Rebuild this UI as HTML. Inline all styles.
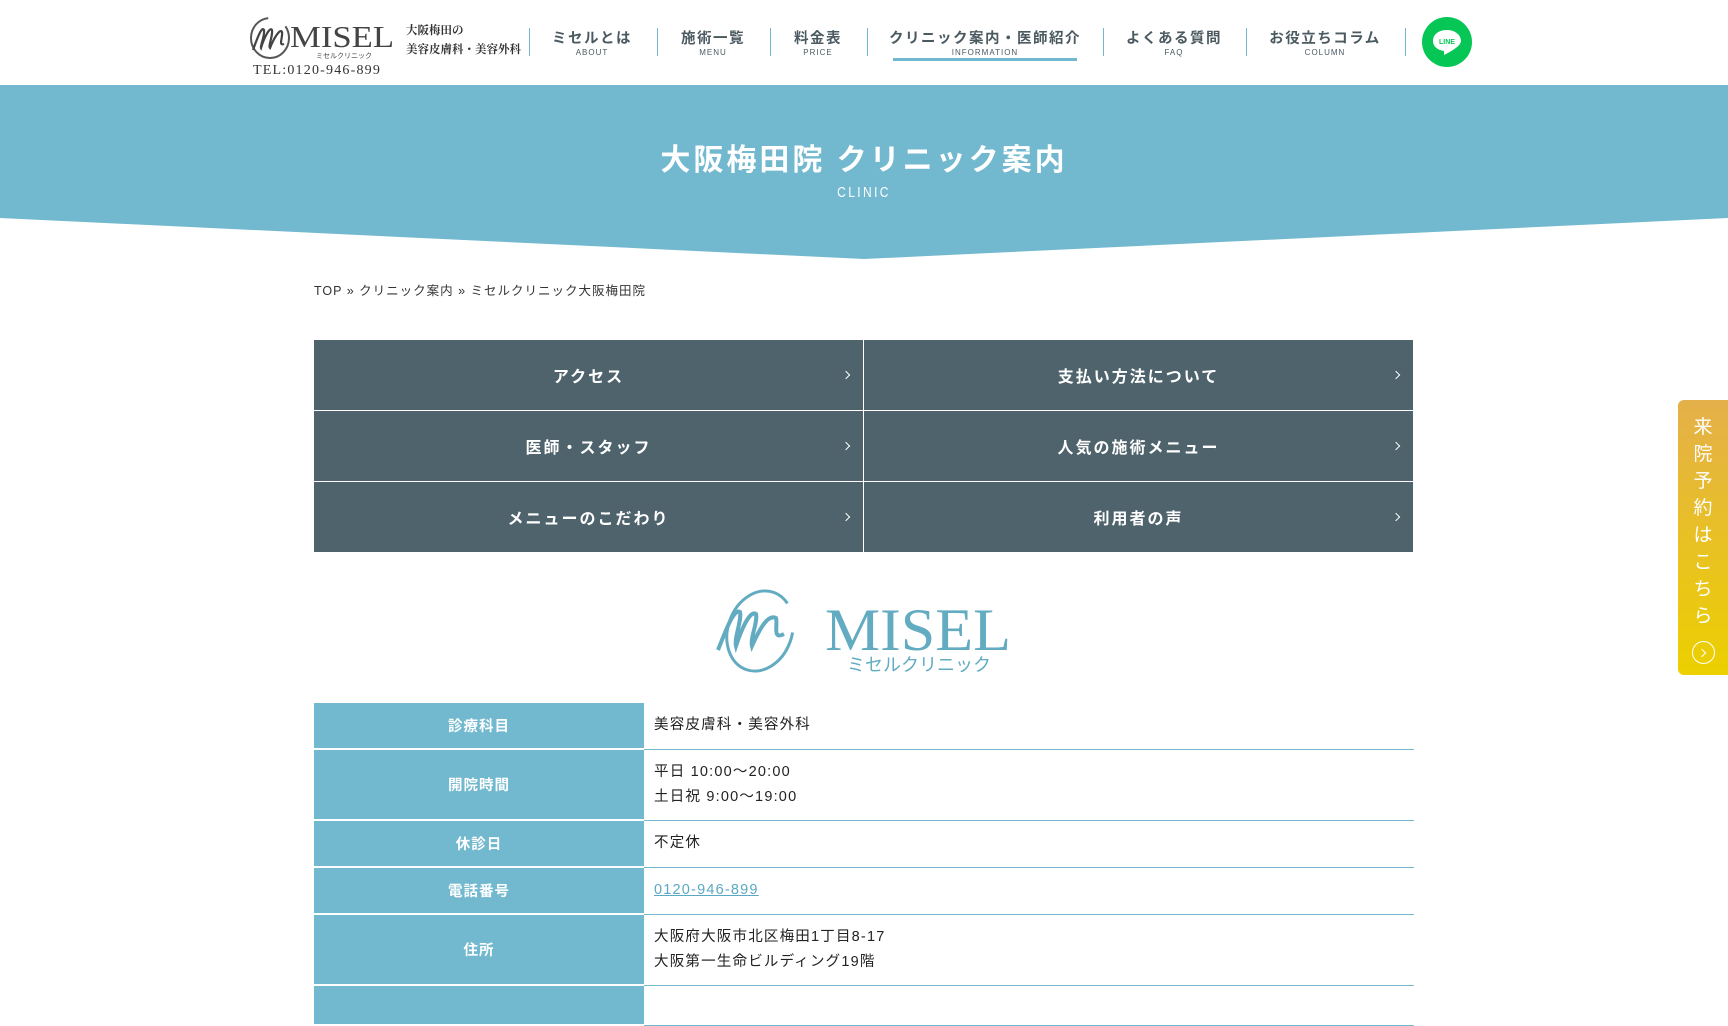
<!DOCTYPE html>
<html><head><meta charset="utf-8"><style>
*{margin:0;padding:0;box-sizing:border-box}
body{width:1728px;height:1000px;overflow:hidden;background:#fff;font-family:"Liberation Sans","Noto Sans CJK JP",sans-serif;color:#333;position:relative}
.hdr{position:absolute;left:0;top:0;width:1728px;height:85px;background:#fff}
.logo{position:absolute;left:248px;top:16px}
.tel{position:absolute;left:253px;top:63px;font-family:"Liberation Serif","Noto Serif CJK SC",serif;font-size:14px;letter-spacing:1.2px;color:#333}
.sub{position:absolute;left:406px;top:21px;font-family:"Noto Serif CJK SC",serif;font-size:11.5px;font-weight:bold;line-height:19px;color:#333}
.div{position:absolute;top:28px;width:1px;height:28px;background:#72b9cf}
.nav{position:absolute;top:27px;text-align:center;transform:translateX(-50%);white-space:nowrap}
.nav b{display:block;font-size:14.5px;letter-spacing:1.5px;color:#4b5a60;font-weight:bold}
.nav i{display:block;font-style:normal;font-size:8px;letter-spacing:1px;color:#4b5a60;margin-top:0}
.act{position:absolute;left:893px;top:58px;width:184px;height:3px;background:#72b9cf}
.line{position:absolute;left:1422px;top:17px;width:50px;height:50px;border-radius:50%;background:#06c755}
.banner{position:absolute;left:0;top:85px}
.title{position:absolute;left:0;width:1728px;top:135px;text-align:center;color:#fff;font-size:30px;font-weight:bold;letter-spacing:3px}
.clinic{position:absolute;left:0;width:1728px;top:184px;text-align:center;color:#fff;font-size:15px;letter-spacing:3px;transform:scaleX(.8)}
.bc{position:absolute;left:314px;top:280px;font-size:12.5px;letter-spacing:1px;color:#333}
.grid{position:absolute;left:314px;top:340px;width:1100px}
.cell{position:absolute;width:549px;height:70px;background:#4e636b;color:#fff;font-weight:bold;font-size:16px;letter-spacing:2px;display:flex;align-items:center;justify-content:center}
.cell:after{content:"";position:absolute;right:14px;top:32px;width:5px;height:5px;border-top:1.3px solid #fff;border-right:1.3px solid #fff;transform:rotate(45deg)}
table{position:absolute;left:314px;top:703px;width:1100px;border-collapse:collapse}
th{width:330px;background:#72b9cf;color:#fff;font-size:14.5px;letter-spacing:1px;border-bottom:2px solid #fff;font-weight:bold}
td{border-bottom:1.5px solid #72b9cf;padding:0 10px;font-size:14.5px;letter-spacing:1.2px;line-height:25px;color:#222}
a{color:#5aa8c3;text-decoration:underline}
.side{position:absolute;left:1678px;top:400px;width:50px;height:275px;border-radius:6px 0 0 6px;background:linear-gradient(#e4b04a,#ecd000)}
.side div{position:absolute;left:0;width:50px;top:14px;text-align:center;color:#fff;font-size:19px;line-height:27px}
.side span{position:absolute;left:14px;top:241px;width:23px;height:23px;border:1.3px solid #fff;border-radius:50%}
.side span:after{content:"";position:absolute;left:6px;top:8px;width:5px;height:5px;border-top:1.3px solid #fff;border-right:1.3px solid #fff;transform:rotate(45deg)}
</style></head><body>
<div class="hdr">
 <svg class="logo" width="150" height="44" viewBox="0 0 150 44">
  <ellipse cx="22" cy="22" rx="19" ry="20" fill="none" stroke="#555" stroke-width="2" stroke-dasharray="90 20"/>
  <path d="M5 34 C10 20 14 10 16 14 C17 20 12 30 13 32 C16 22 22 10 24 14 C25 20 20 30 22 32 C26 22 32 12 34 16 C35 22 30 30 36 28" fill="none" stroke="#444" stroke-width="2.2"/>
  <text x="42" y="31" font-family="Liberation Serif,serif" font-size="31" fill="#444" textLength="104" lengthAdjust="spacingAndGlyphs">MISEL</text>
  <text x="68" y="42" font-size="7" fill="#444" font-family="Noto Sans CJK JP,sans-serif">ミセルクリニック</text>
 </svg>
 <div class="sub">大阪梅田の<br>美容皮膚科・美容外科</div>
 <div class="tel">TEL:0120-946-899</div>
 <div class="div" style="left:529px"></div><div class="div" style="left:657px"></div><div class="div" style="left:770px"></div><div class="div" style="left:867px"></div><div class="div" style="left:1103px"></div><div class="div" style="left:1246px"></div><div class="div" style="left:1405px"></div>
 <div class="nav" style="left:592px"><b>ミセルとは</b><i>ABOUT</i></div>
 <div class="nav" style="left:713px"><b>施術一覧</b><i>MENU</i></div>
 <div class="nav" style="left:818px"><b>料金表</b><i>PRICE</i></div>
 <div class="nav" style="left:985px"><b>クリニック案内・医師紹介</b><i>INFORMATION</i></div>
 <div class="nav" style="left:1174px"><b>よくある質問</b><i>FAQ</i></div>
 <div class="nav" style="left:1325px"><b>お役立ちコラム</b><i>COLUMN</i></div>
 <div class="act"></div>
 <div class="line"><svg width="50" height="50" viewBox="0 0 50 50"><path d="M25 13 C16 13 11 18 11 24 C11 29 15 33 22 34 L22 38 C28 35 39 29 39 24 C39 18 33 13 25 13Z" fill="#fff"/><text x="25" y="27" text-anchor="middle" font-size="7" font-weight="bold" fill="#06c755" font-family="Liberation Sans,sans-serif">LINE</text></svg></div>
</div>
<svg class="banner" width="1728" height="175" viewBox="0 0 1728 175"><path d="M0 0H1728V133L864 174L0 133Z" fill="#72b9cf"/></svg>
<div class="title">大阪梅田院 クリニック案内</div>
<div class="clinic">CLINIC</div>
<div class="bc">TOP » クリニック案内 » ミセルクリニック大阪梅田院</div>
<div class="grid">
 <div class="cell" style="left:0;top:0">アクセス</div><div class="cell" style="left:550px;top:0">支払い方法について</div>
 <div class="cell" style="left:0;top:71px">医師・スタッフ</div><div class="cell" style="left:550px;top:71px">人気の施術メニュー</div>
 <div class="cell" style="left:0;top:142px">メニューのこだわり</div><div class="cell" style="left:550px;top:142px">利用者の声</div>
</div>
<svg style="position:absolute;left:714px;top:588px" width="300" height="90" viewBox="0 0 300 90">
 <ellipse cx="46" cy="43" rx="32" ry="41" fill="none" stroke="#62abc1" stroke-width="3" stroke-dasharray="190 30" transform="rotate(20 46 43)"/>
 <path d="M4 62 C12 42 20 20 26 24 C28 32 20 50 22 58 C28 40 36 22 42 26 C44 34 36 50 38 58 C46 40 54 26 62 30 C64 38 58 52 70 46" fill="none" stroke="#62abc1" stroke-width="4"/>
 <text x="111" y="62" font-family="Liberation Serif,serif" font-size="60" fill="#62abc1" textLength="186" lengthAdjust="spacingAndGlyphs">MISEL</text>
 <text x="133" y="83" font-size="18" fill="#62abc1" font-family="Noto Sans CJK JP,sans-serif" textLength="144" lengthAdjust="spacingAndGlyphs">ミセルクリニック</text>
</svg>
<table>
 <tr style="height:46px"><th>診療科目</th><td>美容皮膚科・美容外科</td></tr>
 <tr style="height:71px"><th>開院時間</th><td>平日 10:00〜20:00<br>土日祝 9:00〜19:00</td></tr>
 <tr style="height:47px"><th>休診日</th><td>不定休</td></tr>
 <tr style="height:47px"><th>電話番号</th><td><a>0120-946-899</a></td></tr>
 <tr style="height:71px"><th>住所</th><td>大阪府大阪市北区梅田1丁目8-17<br>大阪第一生命ビルディング19階</td></tr>
 <tr style="height:40px"><th></th><td></td></tr>
</table>
<div class="side"><div>来<br>院<br>予<br>約<br>は<br>こ<br>ち<br>ら</div><span></span></div>
</body></html>
